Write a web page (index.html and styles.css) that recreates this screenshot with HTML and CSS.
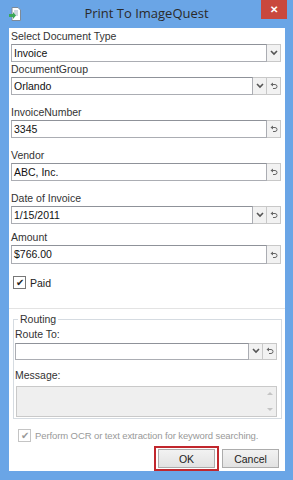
FILE: index.html
```html
<!DOCTYPE html>
<html lang="en">
  <head>
    <meta charset="UTF-8" />
    <title>Print To ImageQuest</title>
    <link rel="stylesheet" href="styles.css">
  </head>
  <body>
    <div class="vindue">
      <div class="titelbar">
        <svg class="appikon" width="12" height="14" viewBox="0 0 12 14">
          <path d="M3 0.5h6l2.5 2.5v10.5h-8.5z" fill="#fff" stroke="#7d8a99" />
          <path d="M5 4h4M5 6h4M5 8h4" stroke="#9fb0c4" />
          <path d="M0 7h4v-2l3 3.5-3 3.5v-2h-4z" fill="#3aa757" />
        </svg>
        <span class="titel">Print To ImageQuest</span>
        <div class="luk">&#x2715;</div>
      </div>

      <div class="indhold">
        <div class="felt">
          <label>Select Document Type</label>
          <div class="raekke">
            <div class="input">Invoice</div>
            <div class="knap pil"></div>
          </div>
        </div>

        <div class="felt">
          <label>DocumentGroup</label>
          <div class="raekke">
            <div class="input">Orlando</div>
            <div class="knap pil"></div>
            <div class="knap fortryd"></div>
          </div>
        </div>

        <div class="felt luft">
          <label>InvoiceNumber</label>
          <div class="raekke">
            <div class="input">3345</div>
            <div class="knap fortryd"></div>
          </div>
        </div>

        <div class="felt luft">
          <label>Vendor</label>
          <div class="raekke">
            <div class="input">ABC, Inc.</div>
            <div class="knap fortryd"></div>
          </div>
        </div>

        <div class="felt luft">
          <label>Date of Invoice</label>
          <div class="raekke">
            <div class="input">1/15/2011</div>
            <div class="knap pil"></div>
            <div class="knap fortryd"></div>
          </div>
        </div>

        <div class="felt lidtluft">
          <label>Amount</label>
          <div class="raekke hoej">
            <div class="input">$766.00</div>
            <div class="knap fortryd"></div>
          </div>
        </div>

        <div class="afkryds paid">
          <span class="boks">&#x2714;</span>
          <span>Paid</span>
        </div>

        <div class="streg"></div>

        <div class="routing">
          <span class="overskrift">Routing</span>
          <label>Route To:</label>
          <div class="raekke">
            <div class="input"></div>
            <div class="knap pil"></div>
            <div class="knap fortryd"></div>
          </div>
          <label class="besked">Message:</label>
          <div class="tekstfelt">
            <span class="op"></span>
            <span class="ned"></span>
          </div>
        </div>

        <div class="afkryds ocr">
          <span class="boks">&#x2714;</span>
          <span>Perform OCR or text extraction for keyword searching.</span>
        </div>

        <div class="knapper">
          <div class="valgt"><button>OK</button></div>
          <button>Cancel</button>
        </div>
      </div>
    </div>

    <script>
      // Tegner pil og fortryd ikoner ind i knapperne
      const pil = '<svg width="8" height="6" viewBox="0 0 8 6"><path d="M1 1l3 3 3-3" fill="none" stroke="#555" stroke-width="1.6"/></svg>';
      const fortryd = '<svg width="8" height="8" viewBox="0 0 8 8"><path d="M2.5 2.5h2.5a2 2 0 0 1 0 4h-2" fill="none" stroke="#666" stroke-width="1"/><path d="M0.5 2.5l2.5-2v4z" fill="#666"/></svg>';

      document.querySelectorAll(".pil").forEach((k) => (k.innerHTML = pil));
      document.querySelectorAll(".fortryd").forEach((k) => (k.innerHTML = fortryd));
    </script>
  </body>
</html>
```

FILE: styles.css
```css
/* ---------VINDUE------------*/
* {
  margin: 0;
  padding: 0;
  box-sizing: border-box;
}

body {
  width: 293px;
  height: 480px;
  font-family: "Liberation Sans", Arial, sans-serif;
  font-size: 10.5px;
  color: #222;
  overflow: hidden;
}

.vindue {
  width: 293px;
  height: 480px;
  background-color: #6aa5e6;
  display: flex;
  flex-direction: column;
}

.titelbar {
  height: 28px;
  flex-shrink: 0;
  position: relative;
  display: flex;
  align-items: center;
  justify-content: center;
}

.appikon {
  position: absolute;
  left: 9px;
  top: 7px;
}

.titel {
  font-family: "Open Sans", sans-serif;
  font-size: 13px;
  line-height: 18px;
  color: #2a2a2a;
  margin-top: -2px;
}

.luk {
  position: absolute;
  right: 6px;
  top: 0;
  width: 26px;
  height: 19px;
  background-color: #c9483d;
  color: #fff;
  font-size: 10px;
  font-weight: 700;
  display: flex;
  align-items: center;
  justify-content: center;
}

.indhold {
  height: 443px;
  flex-shrink: 0;
  margin: 0 8px 0 9px;
  background-color: #fff;
  padding: 1px 4px 0 2px;
  display: flex;
  flex-direction: column;
}

/* ---------FELTER------------*/
label {
  display: block;
  height: 15px;
  line-height: 15px;
  color: #333;
}

.felt.luft {
  margin-top: 10px;
}

.felt.lidtluft {
  margin-top: 6px;
}

.raekke {
  display: flex;
  height: 18px;
}

.raekke.hoej {
  height: 19px;
}

.input {
  flex: 1;
  border: 1px solid #abadb3;
  border-top-color: #8f9299;
  padding-left: 2px;
  line-height: 16px;
  color: #111;
  background-color: #fff;
}

.knap {
  width: 14px;
  border: 1px solid #c8c8c8;
  border-left: none;
  background-color: #f2f2f2;
  display: flex;
  align-items: center;
  justify-content: center;
}

/* ---------AFKRYDSNING------------*/
.afkryds {
  display: flex;
  align-items: center;
  gap: 4px;
  height: 14px;
  white-space: nowrap;
}

.boks {
  width: 13px;
  height: 13px;
  flex-shrink: 0;
  border: 1px solid #777;
  background-color: #fff;
  font-size: 10px;
  line-height: 11px;
  text-align: center;
  color: #222;
}

.paid {
  margin-top: 12px;
  padding-left: 2px;
}

.ocr {
  margin-top: 10px;
  padding-left: 7px;
  color: #999;
  font-size: 9.5px;
  letter-spacing: -0.1px;
}

.ocr .boks {
  border-color: #c4c4c4;
  color: #999;
}

.streg {
  height: 1px;
  flex-shrink: 0;
  background-color: #e3e3e3;
  margin: 18px -4px 0 -2px;
}

/* ---------ROUTING------------*/
.routing {
  position: relative;
  margin: 10px -1px 0 2px;
  border: 1px solid #d5dbe1;
  padding: 7px 4px 0 1px;
  height: 100px;
  flex-shrink: 0;
}

.routing .overskrift {
  position: absolute;
  top: -7px;
  left: 4px;
  padding: 0 2px;
  line-height: 12px;
  background-color: #fff;
  color: #333;
}

.routing .raekke {
  margin-top: 1px;
  height: 17px;
}

.routing .besked {
  margin-top: 8px;
}

.tekstfelt {
  height: 31px;
  margin: 3px 0 0 1px;
  border: 1px solid #c9c9c9;
  background-color: #efefef;
  position: relative;
}

.tekstfelt span {
  position: absolute;
  right: 3px;
  width: 0;
  height: 0;
  border-left: 3px solid transparent;
  border-right: 3px solid transparent;
}

.tekstfelt .op {
  top: 5px;
  border-bottom: 3px solid #c4c4c4;
}

.tekstfelt .ned {
  bottom: 5px;
  border-top: 3px solid #c4c4c4;
}

/* ---------KNAPPER------------*/
.knapper {
  display: flex;
  justify-content: flex-end;
  align-items: center;
  gap: 3px;
  margin-top: 4px;
  padding-right: 2px;
}

.valgt {
  border: 2px solid #c1272d;
  padding: 1px 2px;
}

button {
  width: 57px;
  height: 19px;
  font-family: "Liberation Sans", Arial, sans-serif;
  font-size: 10.5px;
  color: #222;
  background: linear-gradient(#f2f2f2, #e2e2e2);
  border: 1px solid #acacac;
}
```
